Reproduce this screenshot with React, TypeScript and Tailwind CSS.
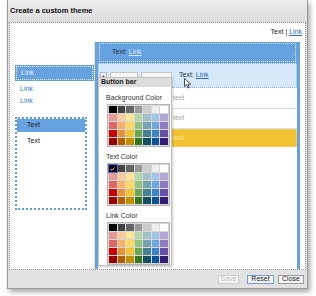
import React from 'react'

const palette = [
  ['#000000', '#434343', '#666666', '#999999', '#cccccc', '#efefef', '#ffffff'],
  ['#ea9999', '#f9cb9c', '#ffe599', '#b6d7a8', '#a2c4c9', '#9fc5e8', '#b4a7d6'],
  ['#e06666', '#f6b26b', '#ffd966', '#93c47d', '#76a5af', '#6fa8dc', '#8e7cc3'],
  ['#cc0000', '#e69138', '#f1c232', '#6aa84f', '#45818e', '#3d85c6', '#674ea7'],
  ['#990000', '#b45f06', '#bf9000', '#38761d', '#134f5c', '#0b5394', '#351c75'],
]

function Swatches({ selected }: { selected?: boolean }) {
  return (
    <div className="ml-[8px] grid w-[63px] grid-cols-7 gap-[1px] border border-[#b5b5b5] bg-[#d6d6d6] p-[1px]">
      {palette.flat().map((c, i) => (
        <div key={i} className="relative h-[7px]" style={{ backgroundColor: c }}>
          {selected && i === 0 && (
            <div className="absolute inset-0 flex items-center justify-center outline outline-1 outline-[#4a6fd8]">
              <svg width="5" height="4" viewBox="0 0 5 4">
                <path d="M0.5 2 L2 3.3 L4.5 0.6" stroke="#fff" strokeWidth="0.9" fill="none" />
              </svg>
            </div>
          )}
        </div>
      ))}
    </div>
  )
}

function Section({ label, selected }: { label: string; selected?: boolean }) {
  return (
    <div className="flex flex-col">
      <div className="pl-[7px] text-[7px] leading-[9px] text-[#333]">{label}</div>
      <div className="mt-[2px]">
        <Swatches selected={selected} />
      </div>
    </div>
  )
}

export default function App() {
  return (
    <div className="relative h-[296px] w-[316px] bg-white font-['Liberation_Sans',Arial,sans-serif]">
      {/* Dialog */}
      <div className="ml-[7px] flex h-[289px] w-[301px] flex-col border border-t-0 border-[#9a9a9a] bg-[#e2e2e2] shadow-[2px_3px_5px_rgba(0,0,0,0.35)]">
        {/* Title */}
        <div className="flex h-[22px] items-center bg-gradient-to-b from-[#ececec] to-[#dedede] pl-[2px] text-[7.5px] font-bold text-[#111]">
          Create a custom theme
        </div>

        {/* Body */}
        <div className="mx-[1px] flex h-[248px] flex-col border border-dotted border-[#8c8c8c] bg-white">
          <div className="flex h-[19px] items-center justify-end pr-[3px] text-[7px] text-[#222]">
            Text |&nbsp;<span className="text-[#2a6ebb] underline">Link</span>
          </div>

          <div className="flex flex-1">
            {/* Sidebar */}
            <div className="flex w-[85px] flex-col border-r border-dotted border-[#c8c8c8] pt-[23px] pl-[5px]">
              <div className="h-[16px] bg-[#66a2df] p-[1px]">
                <div className="flex h-full items-center border border-dotted border-[#e8f1fb] pl-[4px] text-[7px] text-[#e4eefa]">
                  Link
                </div>
              </div>
              <div className="flex flex-col gap-[3px] pl-[5px] pt-[3px] text-[7px] leading-[9px] text-[#2f7bd0]">
                <span>Link</span>
                <span>Link</span>
              </div>
              <div className="mt-[12px] flex h-[93px] w-[72px] flex-col border-2 border-dotted border-[#5d9de0]">
                <div className="flex h-[13px] items-center bg-[#66a2df] pl-[10px] text-[7px] text-[#222]">Text</div>
                <div className="pl-[10px] pt-[4px] text-[7px] text-[#222]">Text</div>
              </div>
            </div>

            {/* Main column */}
            <div className="relative flex w-[205px] flex-col border-x-[3px] border-[#66a2df]">
              <div className="flex h-[21px] items-center bg-[#66a2df] pl-[14px] text-[7px] text-[#1f2f44] outline-1 outline-dotted -outline-offset-2 outline-[#d8e8f8]">
                Text:&nbsp;<span className="text-[#d8e9fb] underline">Link</span>
              </div>
              <div className="flex h-[25px] items-center border border-dotted border-[#8ab8ea] bg-[#d6e7f8] text-[7px] text-[#1f2f44]">
                <div className="ml-[1px] flex w-[74px] items-center gap-[3px]">
                  <div className="flex h-[7px] w-[7px] items-center justify-center border border-[#b8b8b8] bg-[#f4f4f4] text-[4px] text-[#555]">▲</div>
                  <div className="h-[7px] w-[28px] border border-[#c4c4c4] bg-[#f7f7f7]" />
                  <div className="h-[7px] w-[31px] border border-[#c4c4c4] bg-[#f7f7f7]" />
                </div>
                <span className="ml-[5px]">Text:&nbsp;</span>
                <span className="text-[#2a6ebb] underline">Link</span>
              </div>
              <div className="flex h-[21px] items-center border-b border-[#dedede] pl-[75px] text-[7px] text-[#a5a5a5]">text</div>
              <div className="flex h-[20px] items-center border-b border-[#dedede] pl-[75px] text-[7px] text-[#a5a5a5]">text</div>
              <div className="flex h-[18px] items-center border border-dotted border-[#f7d77a] bg-[#f1c232] pl-[74px] text-[7px] text-[#fbe7a8]">text</div>
              <div className="flex-1" />

              {/* Color popup */}
              <div className="absolute left-0 top-[35px] flex h-[189px] w-[74px] flex-col gap-[6px] border border-[#c2c2c2] bg-white shadow-[1px_1px_2px_rgba(0,0,0,0.2)]">
                <div className="flex h-[9px] items-center bg-[#dcdcdc] pl-[2px] text-[7px] font-bold text-[#222]">Button bar</div>
                <div className="flex flex-col gap-[5px]">
                  <Section label="Background Color" />
                  <Section label="Text Color" selected />
                  <Section label="Link Color" />
                </div>
              </div>

              {/* Cursor */}
              <svg className="absolute left-[86px] top-[36px]" width="8" height="11" viewBox="0 0 8 11">
                <path d="M0.5 0.5 L0.5 8.5 L2.5 6.6 L4 10 L5.3 9.4 L3.9 6.2 L6.6 6.2 Z" fill="#fff" stroke="#222" strokeWidth="0.8" />
              </svg>
            </div>
          </div>
        </div>

        {/* Footer */}
        <div className="flex flex-1 items-center justify-end gap-[4px] pr-[3px] text-[7px]">
          <button className="mr-[4px] flex h-[9px] w-[21px] items-center justify-center border border-[#cfcfcf] bg-[#f3f3f3] text-[#c2c2c2]">Save</button>
          <button className="flex h-[9px] w-[27px] items-center justify-center border border-[#6e9fd6] bg-[#f5f5f5] text-[#222]">Reset</button>
          <button className="flex h-[9px] w-[26px] items-center justify-center border border-[#9a9a9a] bg-[#f5f5f5] text-[#222]">Close</button>
        </div>
      </div>
    </div>
  )
}
